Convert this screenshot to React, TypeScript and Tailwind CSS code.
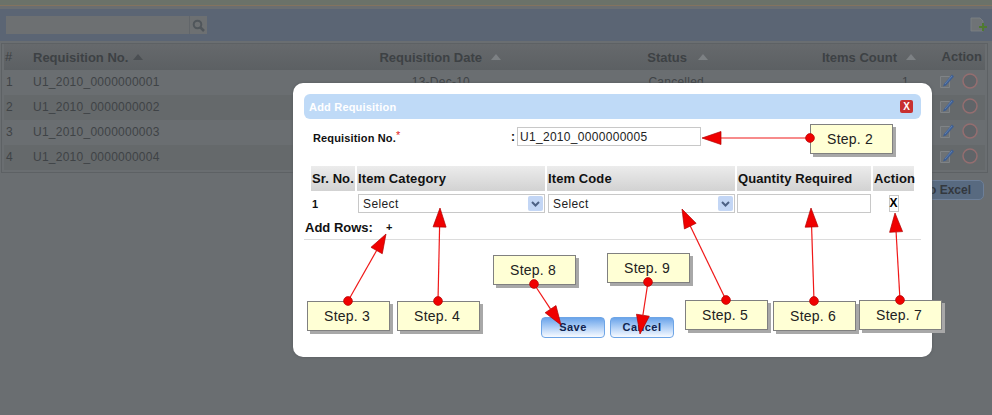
import React from 'react'

const rows = [
  { id: 1, no: 'U1_2010_0000000001', date: '13-Dec-10', status: 'Cancelled', count: 1 },
  { id: 2, no: 'U1_2010_0000000002', date: '', status: '', count: '' },
  { id: 3, no: 'U1_2010_0000000003', date: '', status: '', count: '' },
  { id: 4, no: 'U1_2010_0000000004', date: '', status: '', count: '' },
]

// x1,y1 = dot on the note, x2,y2 = arrow tip
const arrows = [
  [810, 138, 702, 138],
  [348, 301, 386, 234],
  [438, 301, 440, 208],
  [726, 300, 682, 209],
  [814, 301, 811, 208],
  [900, 300, 895, 213],
  [534, 284, 561, 325],
  [648, 282, 640, 334],
]

const notes = [
  { label: 'Step. 2', cls: 'left-[810px] top-[124px]' },
  { label: 'Step. 3', cls: 'left-[307px] top-[301px]' },
  { label: 'Step. 4', cls: 'left-[397px] top-[301px]' },
  { label: 'Step. 5', cls: 'left-[685px] top-[300px]' },
  { label: 'Step. 6', cls: 'left-[773px] top-[301px]' },
  { label: 'Step. 7', cls: 'left-[859px] top-[300px]' },
  { label: 'Step. 8', cls: 'left-[493px] top-[255px]' },
  { label: 'Step. 9', cls: 'left-[607px] top-[253px]' },
]

const bgCols = 'grid grid-cols-[27px_271px_288px_188px_135px_68px] gap-x-[1px]'
const formCols = 'grid grid-cols-[44px_188px_188px_134px_41px] gap-x-[2px]'

const SortUp = ({ dark }: { dark?: boolean }) => (
  <svg className="shrink-0" width="12" height="8" viewBox="0 0 12 8">
    <path d="M6 1l5 6H1z" fill={dark ? '#4b4f53' : '#7d8184'} />
  </svg>
)

const EditIcon = () => (
  <svg width="16" height="16" viewBox="0 0 16 16">
    <path d="M1.5 3.5h9v11h-9z" fill="#6e7275" stroke="#7f8386" />
    <path d="M5 11 13 1.5l2 2-8 9-3 1z" fill="#3f5f92" />
    <path d="M6 11 13 3" stroke="#5f7fb0" />
  </svg>
)

const DeleteIcon = () => (
  <svg width="16" height="16" viewBox="0 0 16 16">
    <circle cx="8" cy="8" r="7" fill="#606468" stroke="#946e70" strokeWidth="1.5" />
  </svg>
)

const FormHead = ({ children }: { children: React.ReactNode }) => (
  <div className="h-[25px] bg-gradient-to-b from-[#ececec] to-[#d2d2d2] pl-[1px] text-[13px] font-bold leading-[25px] tracking-[0.1px] text-[#111] whitespace-nowrap">
    {children}
  </div>
)

const SelectBox = () => (
  <div className="flex h-[19px] w-full items-center justify-between border border-[#c8c8c8] bg-white pl-[4px] pr-[1px] text-[12px] tracking-[0.4px] text-[#222]">
    Select
    <span className="flex h-[15px] w-[15px] items-center justify-center rounded-[2px] bg-[#c3d6f5]">
      <svg width="9" height="6" viewBox="0 0 9 6">
        <path d="M1 1l3.5 3.5L8 1" fill="none" stroke="#4d6185" strokeWidth="2" />
      </svg>
    </span>
  </div>
)

const ModalButton = ({ children }: { children: React.ReactNode }) => (
  <button className="h-[21px] w-[64px] rounded-[4px] border border-[#6ea5e6] bg-gradient-to-b from-[#6aa4ea] to-[#f8fbff] text-[11px] font-bold tracking-[0.5px] text-[#0f2350]">
    {children}
  </button>
)

export default function App() {
  return (
    <div className="relative h-[415px] w-[992px] overflow-hidden bg-[#6a6e71] font-['Liberation_Sans',sans-serif]">
      {/* page behind the dialog */}
      <div className="h-[5px] bg-[#6b7269]" />
      <div className="h-[1px] bg-[#83735f]" />
      <div className="pt-[3px]">
        <div className="flex h-[32px] items-center justify-between bg-[#5b6574] pl-[6px] pr-[4px]">
          <div className="flex h-[18px]">
            <div className="h-full w-[183px] bg-[#6d7072]" />
            <div className="flex h-full w-[18px] items-center justify-center border-l border-[#62666a] bg-[#6d7072]">
              <svg width="13" height="13" viewBox="0 0 13 13">
                <circle cx="5.5" cy="5.5" r="3.8" fill="none" stroke="#50565b" strokeWidth="2" />
                <path d="M8.5 8.5 12 12" stroke="#50565b" strokeWidth="2.5" />
              </svg>
            </div>
          </div>
          <svg width="18" height="16" viewBox="0 0 18 16">
            <path d="M1 1h9l3 3v10H1z" fill="#6f7376" stroke="#7f8386" strokeWidth="0.8" />
            <path d="M12 6v3H9v2h3v3h2v-3h3V9h-3V6z" fill="#4f7a30" />
          </svg>
        </div>
      </div>
      <div className="ml-[1px] mr-[4px] mt-[2px] h-[130px] border border-[#5d6164] px-[2px]">
        <div className={`${bgCols} h-[26px] bg-gradient-to-b from-[#66696c] to-[#5c6063] text-[13px] font-bold leading-[25px] text-[#3d4144]`}>
          <div className="pl-[1px] font-normal">#</div>
          <div className="flex items-center gap-[4px] pl-[1px]">Requisition No. <SortUp dark /></div>
          <div className="flex items-center justify-end gap-[8px] pr-[90px]">Requisition Date <SortUp /></div>
          <div className="flex items-center justify-end gap-[10px] pr-[72px]">Status <SortUp /></div>
          <div className="flex items-center justify-end gap-[8px]">Items Count <SortUp /></div>
          <div className="pr-[4px] text-right">Action</div>
        </div>
        {rows.map((r) => (
          <div
            key={r.id}
            className={`${bgCols} h-[25px] text-[12px] leading-[25px] tracking-[0.25px] text-[#3f4346] ${r.id % 2 === 0 ? 'bg-[#65696b]' : ''}`}
          >
            <div className="pl-[2px]">{r.id}</div>
            <div className="pl-[1px]">{r.no}</div>
            <div className="pr-[122px] text-right">{r.date}</div>
            <div className="pr-[77px] text-right">{r.status}</div>
            <div className="pr-[8px] text-right">{r.count}</div>
            <div className="flex items-center justify-end gap-[7px] pb-[4px] pr-[8px]">
              <EditIcon />
              <DeleteIcon />
            </div>
          </div>
        ))}
      </div>
      <div className="mt-[7px] flex justify-end pr-[8px]">
        <div className="h-[20px] w-[60px] rounded-[5px] border border-[#6d7f98] bg-[#586a80] pr-[13px] text-right text-[12px] font-bold leading-[18px] whitespace-nowrap text-[#33383e]">
          to Excel
        </div>
      </div>

      {/* dialog */}
      <div className="absolute left-[293px] top-[83px] h-[274px] w-[639px] rounded-[10px] bg-white p-[11px] shadow-[0_0_3px_#55595c]">
        <div className="flex h-[25px] items-center justify-between rounded-[6px] bg-[#bfdaf7] pl-[5px] pr-[8px]">
          <span className="pt-[2px] text-[11px] font-bold tracking-[0.2px] text-white">Add Requisition</span>
          <span className="flex h-[13px] w-[13px] items-center justify-center rounded-[2px] bg-[#c83030] text-[10px] font-bold leading-none text-white">
            X
          </span>
        </div>
        <div className="mt-[8px] flex h-[19px] items-center pl-[9px]">
          <span className="w-[198px] pt-[3px] text-[11px] font-bold leading-[14px] tracking-[0.15px] text-[#111]">
            Requisition No.<span className="relative -top-[3px] text-[11px] font-normal leading-none text-[#e02020]">*</span>
          </span>
          <span className="w-[6px] pt-[1px] text-[12px] font-bold text-[#111]">:</span>
          <div className="h-[19px] w-[184px] border border-[#c8c8c8] pl-[2px] text-[12px] leading-[18px] tracking-[0.3px] text-[#222]">
            U1_2010_0000000005
          </div>
        </div>
        <div className={`${formCols} mt-[20px] pl-[7px]`}>
          <FormHead>Sr. No.</FormHead>
          <FormHead>Item Category</FormHead>
          <FormHead>Item Code</FormHead>
          <FormHead>Quantity Required</FormHead>
          <FormHead>Action</FormHead>
        </div>
        <div className={`${formCols} mt-[2px] h-[21px] items-center pl-[7px]`}>
          <div className="pl-[1px] pt-[1px] text-[11px] font-bold text-[#111]">1</div>
          <div className="pl-[1px]"><SelectBox /></div>
          <div className="pl-[1px]"><SelectBox /></div>
          <div className="h-[19px] border border-[#c8c8c8] bg-white" />
          <div className="flex justify-center">
            <div className="h-[17px] w-[10px] border border-[#c8c8c8] text-center text-[12px] font-bold leading-[15px] text-black">X</div>
          </div>
        </div>
        <div className="mt-[3px] flex h-[20px] items-center pt-[1px] text-[13px] font-bold text-[#111]">
          <span className="pl-[1px]">Add Rows:</span>
          <span className="ml-[13px] text-[11px]">+</span>
        </div>
        <div className="mt-[2px] border-t border-[#dcdcdc]" />
        <div className="mt-[77px] flex gap-[5px] pl-[237px]">
          <ModalButton>Save</ModalButton>
          <ModalButton>Cancel</ModalButton>
        </div>
      </div>

      {/* step notes and arrows painted on the screenshot */}
      {notes.map((n) => (
        <div
          key={n.label}
          className={`absolute ${n.cls} flex h-[30px] w-[83px] items-center justify-center border border-[#808080] bg-[#ffffd5] pr-[3px] text-[14px] tracking-[0.2px] text-[#222] shadow-[3px_3px_0_#a8a8a8]`}
        >
          {n.label}
        </div>
      ))}
      <svg className="absolute left-0 top-0" width="992" height="415">
        {arrows.map(([x1, y1, x2, y2], i) => {
          const a = Math.atan2(y2 - y1, x2 - x1)
          const bx = x2 - Math.cos(a) * 19
          const by = y2 - Math.sin(a) * 19
          const nx = -Math.sin(a) * 6.5
          const ny = Math.cos(a) * 6.5
          return (
            <g key={i}>
              <line x1={x1} y1={y1} x2={bx} y2={by} stroke="#f01818" strokeWidth="1.2" />
              <polygon
                points={`${x2},${y2} ${bx + nx},${by + ny} ${bx - nx},${by - ny}`}
                fill="#f00000"
                stroke="#b00000"
                strokeWidth="0.7"
              />
              <circle cx={x1} cy={y1} r="4.4" fill="#f00000" stroke="#b00000" strokeWidth="0.7" />
            </g>
          )
        })}
      </svg>
    </div>
  )
}
